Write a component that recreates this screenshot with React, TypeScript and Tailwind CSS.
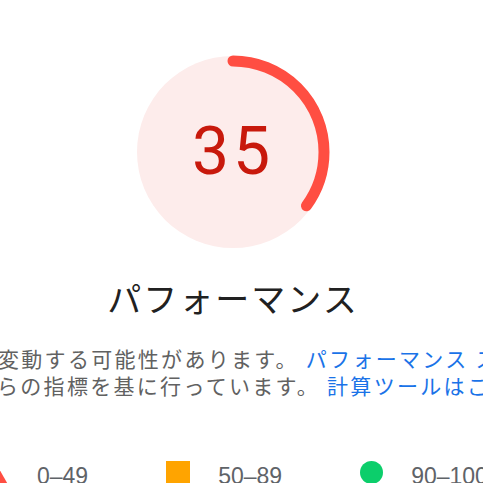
import React from 'react'

const FAIL = '#ff4e42'

function Gauge({ score }: { score: number }) {
  const r = 91
  const c = 2 * Math.PI * r
  return (
    <div className="relative w-[200px] h-[200px]">
      <svg width="200" height="200" viewBox="0 0 200 200" className="-rotate-90">
        <circle cx="100" cy="100" r="96" fill="#fdeceb" />
        <circle
          cx="100"
          cy="100"
          r={r}
          fill="none"
          stroke={FAIL}
          strokeWidth="11"
          strokeLinecap="round"
          strokeDasharray={`${(score / 100) * c} ${c}`}
        />
      </svg>
      <div className="absolute inset-0 flex items-center justify-center">
        <span className="text-[66px] leading-none tracking-[4px] text-[#c8190c] font-['Roboto',sans-serif]">
          {score}
        </span>
      </div>
    </div>
  )
}

export default function App() {
  return (
    <div className="w-[483px] h-[483px] overflow-hidden bg-white relative">
      <div className="w-[466px] flex flex-col items-center pt-[52px]">
        <Gauge score={35} />
        <div className="mt-[26px] text-[34px] leading-[40px] tracking-[2px] text-[#212121] font-['Noto_Sans_CJK_JP',sans-serif]">
          パフォーマンス
        </div>
      </div>

      {/* description, wider than the window */}
      <div className="mt-[27px] text-[21px] leading-[27px] tracking-[2.3px] text-[#616161] font-['Noto_Sans_CJK_JP',sans-serif] whitespace-nowrap">
        <div className="-ml-[2px]">
          変動する可能性があります。 <a className="text-[#1a73e8]">パフォーマンス スコアの計算</a>は、これ
        </div>
        <div className="-ml-[3px]">
          らの指標を基に行っています。 <a className="text-[#1a73e8]">計算ツールはこちら</a>
        </div>
      </div>

      {/* legend */}
      <div className="mt-[64px] -ml-[14px] flex items-start gap-[78px] whitespace-nowrap text-[23px] leading-[24px] text-[#5f6368] font-['Liberation_Sans',sans-serif]">
        <div className="flex items-start gap-[27px]">
          <svg width="24" height="22" viewBox="0 0 24 22" className="mt-[4px]">
            <polygon points="12,0 24,21 0,21" fill={FAIL} />
          </svg>
          <span className="mt-[1px]">0–49</span>
        </div>
        <div className="flex items-start gap-[28px]">
          <div className="w-[24px] h-[24px] bg-[#ffa400] mt-[-2px]" />
          <span className="mt-[1px]">50–89</span>
        </div>
        <div className="flex items-start gap-[28px]">
          <div className="w-[23px] h-[23px] rounded-full bg-[#0cce6b] mt-[-2px]" />
          <span className="mt-[1px]">90–100</span>
        </div>
      </div>
    </div>
  )
}
